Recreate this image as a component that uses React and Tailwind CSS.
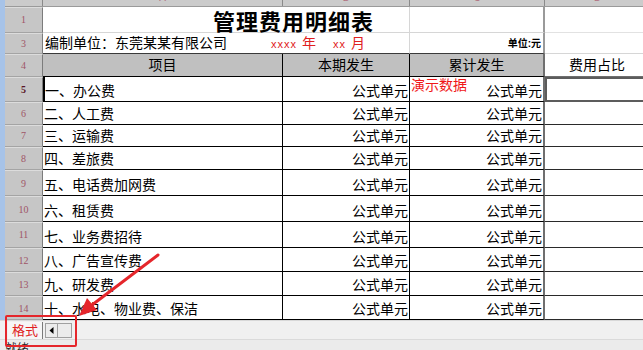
import React from 'react';

const rows = [
  { n: 5, h: 'h-[25px]', name: '一、办公费', active: true },
  { n: 6, h: 'h-[23px]', name: '二、人工费' },
  { n: 7, h: 'h-[22px]', name: '三、运输费' },
  { n: 8, h: 'h-[24px]', name: '四、差旅费' },
  { n: 9, h: 'h-[26px]', name: '五、电话费加网费' },
  { n: 10, h: 'h-[26px]', name: '六、租赁费' },
  { n: 11, h: 'h-[26px]', name: '七、业务费招待' },
  { n: 12, h: 'h-[25px]', name: '八、广告宣传费' },
  { n: 13, h: 'h-[24px]', name: '九、研发费' },
  { n: 14, h: 'h-[24px]', name: '十、水电、物业费、保洁' },
];

function RowHead({ n, active }) {
  return (
    <div
      className={`w-[38px] shrink-0 h-full bg-[#c6c6c6] border-b border-b-[#a4a4a4] border-t border-t-[#dcdcdc] border-r border-r-[#7c7c7c] flex items-center justify-center font-['Liberation_Serif',serif] text-[10px] ${
        active ? 'text-[#5a1626] font-bold' : 'text-[#a05566]'
      }`}
    >
      {n}
    </div>
  );
}

// column letters are scrolled almost out of view, only their feet show
function ColLetter({ w, letter }) {
  return (
    <div className={`${w} shrink-0 h-full flex items-start justify-center border-r border-r-[#8a8a8a] overflow-hidden`}>
      <span className="-mt-[7px] text-[10px] leading-[10px] text-[#b07080]">{letter}</span>
    </div>
  );
}

export default function App() {
  return (
    <div className="w-[643px] h-[350px] overflow-hidden relative bg-white font-['Liberation_Sans','Noto_Sans_CJK_SC',sans-serif] text-black">
      <div className="h-[320px] overflow-hidden flex">
        <div className="w-[5px] shrink-0 bg-[#a7c3e8]" />
        <div className="flex flex-col">
          {/* column letters */}
          <div className="flex h-[7px] bg-[#cbcbcb] border-b border-b-[#9a9a9a]">
            <div className="w-[38px] shrink-0 border-r border-r-[#8a8a8a]" />
            <ColLetter w="w-[240px]" letter="A" />
            <ColLetter w="w-[127px]" letter="B" />
            <ColLetter w="w-[135px]" letter="C" />
            <ColLetter w="w-[106px]" letter="D" />
          </div>

          {/* row 1: title */}
          <div className="flex h-[26px]">
            <RowHead n={1} />
            <div className="w-[367px] shrink-0 border-b border-r border-[#d6d6d6] flex items-center justify-center pl-[135px] pt-[2px]">
              <span className="whitespace-nowrap text-[22px] leading-none font-bold tracking-[1px] font-['Noto_Sans_CJK_SC',sans-serif]">管理费用明细表</span>
            </div>
            <div className="w-[135px] shrink-0 border-b border-[#d6d6d6] border-r-2 border-r-[#9a9a9a]" />
            <div className="w-[106px] shrink-0 border-b border-[#e2e2e2]" />
          </div>

          {/* row 3: unit line */}
          <div className="flex h-[22px]">
            <RowHead n={3} />
            <div className="w-[367px] shrink-0 border-b border-b-[#3a3a3a] border-r border-r-[#d6d6d6] flex items-end pl-[2px] pb-[3px] whitespace-nowrap">
              <span className="text-[14px] leading-none">编制单位：东莞某某有限公司</span>
              <span className="ml-[44px] text-[11px] leading-none tracking-[1px] text-[#e02020]">xxxx</span>
              <span className="ml-[5px] text-[14px] leading-none text-[#e02020]">年</span>
              <span className="ml-[17px] text-[11px] leading-none tracking-[1px] text-[#e02020]">xx</span>
              <span className="ml-[5px] text-[14px] leading-none text-[#e02020]">月</span>
            </div>
            <div className="w-[135px] shrink-0 border-b border-b-[#3a3a3a] border-r-2 border-r-[#9a9a9a] flex items-end justify-end pr-[2px] pb-[4px]">
              <span className="text-[10px] leading-none font-bold">单位:元</span>
            </div>
            <div className="w-[106px] shrink-0 border-b border-[#d6d6d6]" />
          </div>

          {/* row 4: headers */}
          <div className="flex h-[23px]">
            <RowHead n={4} />
            <div className="w-[240px] shrink-0 bg-[#c0c0c0] border-b border-r border-black flex items-center justify-center text-[14px] leading-none">项目</div>
            <div className="w-[127px] shrink-0 bg-[#c0c0c0] border-b border-r border-black flex items-center justify-center text-[14px] leading-none">本期发生</div>
            <div className="w-[135px] shrink-0 bg-[#c0c0c0] border-b border-black border-r-2 border-r-[#6f6f6f] flex items-center justify-center text-[14px] leading-none">累计发生</div>
            <div className="w-[106px] shrink-0 border-b border-[#6f6f6f] flex items-center justify-center pr-[2px] text-[14px] leading-none">费用占比</div>
          </div>

          {/* data rows */}
          {rows.map((r) => (
            <div key={r.n} className={`flex ${r.h}`}>
              <RowHead n={r.n} active={r.active} />
              <div
                className={`w-[240px] shrink-0 border-b border-black border-r flex items-end pb-[3px] text-[14px] leading-none whitespace-nowrap ${
                  r.active ? 'border-l-2 pl-[0px]' : 'pl-[1px]'
                }`}
              >
                {r.name}
              </div>
              <div className="w-[127px] shrink-0 border-b border-r border-black flex items-end justify-end pr-[1px] pb-[3px] text-[14px] leading-none">
                公式单元
              </div>
              <div className="w-[135px] shrink-0 border-b border-black border-r-2 border-r-[#6f6f6f] flex items-end justify-between pl-[1px] pr-[1px] pb-[3px] text-[14px] leading-none">
                <span className="self-start pt-[1px] text-[#f01818]">{r.active ? '演示数据' : ''}</span>
                <span>公式单元</span>
              </div>
              {r.active ? (
                <div className="w-[106px] shrink-0 border-2 border-[#5c5c5c] bg-white" />
              ) : (
                <div className="w-[106px] shrink-0 border-b border-[#2a2a2a]" />
              )}
            </div>
          ))}
        </div>
      </div>

      {/* sheet tabs */}
      <div className="h-[19px] bg-[#f0f0f0] border-t border-t-[#d8d8d8] flex items-center">
        <div className="ml-[8px] w-[35px] h-[17px] bg-[#f6f6f6] border-r border-r-[#7a7a7a] flex items-center justify-center">
          <span className="text-[13px] leading-none text-[#e02020]">格式</span>
        </div>
        <div className="ml-[2px] w-[13px] h-[15px] bg-[#ececec] border border-[#a0a0a0] flex items-center justify-center">
          <svg width="5" height="7" viewBox="0 0 5 7">
            <path d="M4.5 0 L0.5 3.5 L4.5 7 Z" fill="#000" />
          </svg>
        </div>
        <div className="w-[14px] h-[15px] bg-[#ececec] border border-l-0 border-[#a0a0a0]" />
      </div>

      {/* status bar */}
      <div className="h-[11px] bg-[#ebebeb] border-t border-t-[#dadada] overflow-hidden pl-[5px] pt-[3px]">
        <span className="block text-[12px] leading-none text-[#222]">就绪</span>
      </div>

      {/* annotation */}
      <svg className="absolute inset-0 pointer-events-none" width="643" height="350" viewBox="0 0 643 350">
        <rect x="6" y="316" width="70" height="30" fill="none" stroke="#e5262b" strokeWidth="2" rx="1" />
        <line x1="158" y1="255" x2="92" y2="305" stroke="#e5262b" strokeWidth="3" strokeLinecap="round" />
        <path d="M79 316 L97 310 L87 298 Z" fill="#e5262b" />
      </svg>
    </div>
  );
}
